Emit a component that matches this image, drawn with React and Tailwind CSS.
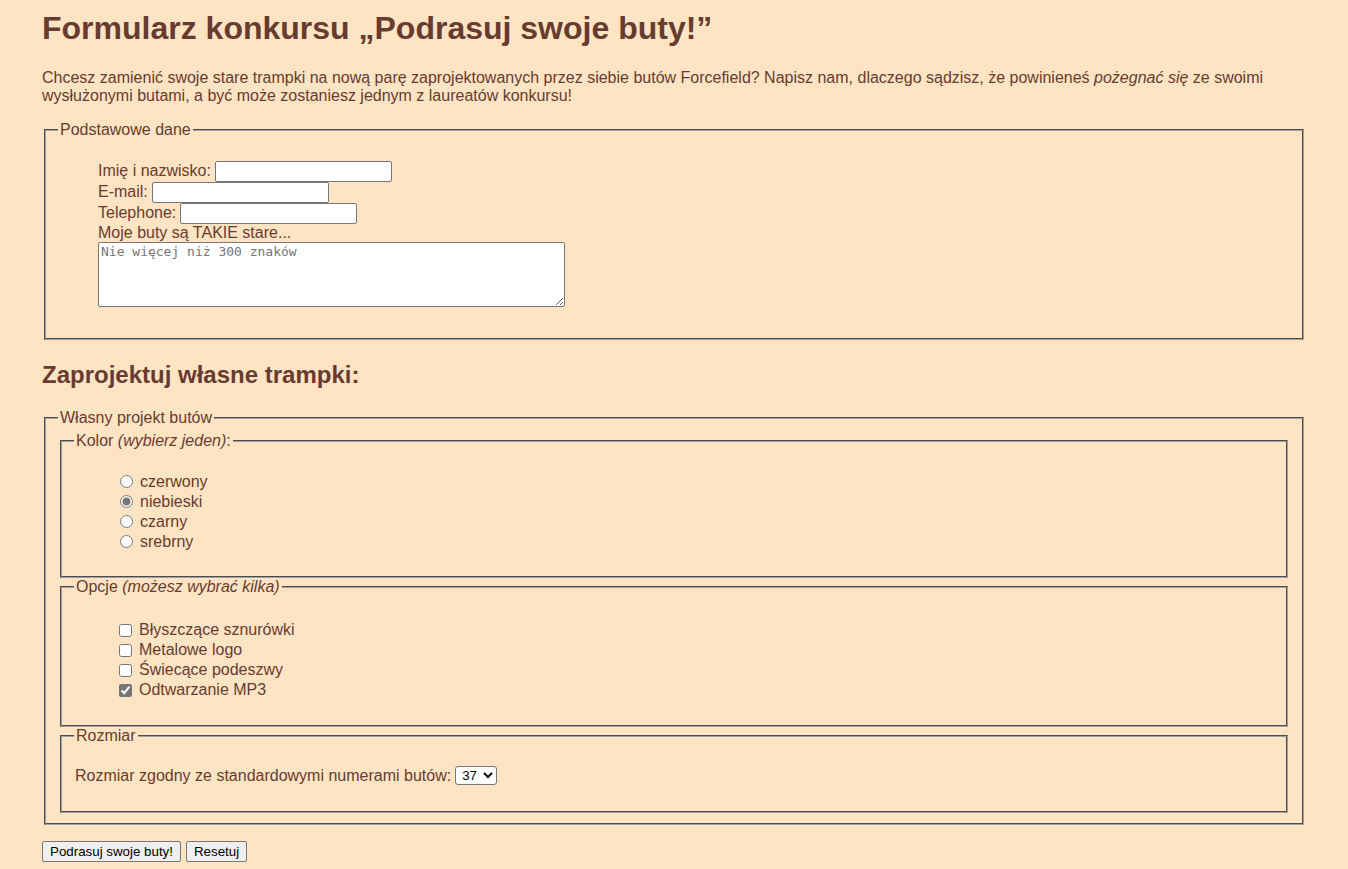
import { useState } from "react";

const FIELDSET = "mx-[2px] border-2 [border-style:groove] border-[#a0a0a0] px-3 pt-[5.6px] pb-[10px]";
const LEGEND = "px-[2px] leading-[18px]";
const INPUT =
  "h-[21px] w-[177px] rounded-[2px] border border-[#767676] bg-white px-[2px] text-[13.33px] text-black outline-none";
const BUTTON = "h-[21px] rounded-[2px] border border-[#767676] bg-[#efefef] px-[7px] text-[13.33px] text-black";

const COLORS = ["czerwony", "niebieski", "czarny", "srebrny"];
const OPTIONS = [
  { id: "laces", label: "Błyszczące sznurówki", checked: false },
  { id: "logo", label: "Metalowe logo", checked: false },
  { id: "soles", label: "Świecące podeszwy", checked: false },
  { id: "mp3", label: "Odtwarzanie MP3", checked: true },
];

export default function App() {
  const [color, setColor] = useState("niebieski");
  const [opts, setOpts] = useState(() => Object.fromEntries(OPTIONS.map((o) => [o.id, o.checked])));
  const [size, setSize] = useState("37");

  return (
    <div
      className="min-h-screen bg-[#ffe4c4] px-[42px] pb-2 pt-[10px] text-[16px] text-[#683b30]"
      style={{ fontFamily: '"Liberation Sans", Arial, sans-serif' }}
    >
      <h1 className="mb-[21px] text-[32px] font-bold leading-[37px]">Formularz konkursu „Podrasuj swoje buty!”</h1>
      <p className="mb-4 mt-[22px] leading-[18px]">
        Chcesz zamienić swoje stare trampki na nową parę zaprojektowanych przez siebie butów Forcefield? Napisz nam,
        dlaczego sądzisz, że powinieneś <em>pożegnać się</em> ze swoimi wysłużonymi butami, a być może zostaniesz
        jednym z laureatów konkursu!
      </p>

      <form onSubmit={(e) => e.preventDefault()}>
        <fieldset className={FIELDSET}>
          <legend className={LEGEND}>Podstawowe dane</legend>
          <ul className="my-4 pl-10">
            <li className="flex h-[21px] items-center gap-1">
              <label htmlFor="name">Imię i nazwisko:</label>
              <input id="name" type="text" className={INPUT} />
            </li>
            <li className="flex h-[21px] items-center gap-1">
              <label htmlFor="email">E-mail:</label>
              <input id="email" type="email" className={INPUT} />
            </li>
            <li className="flex h-[21px] items-center gap-1">
              <label htmlFor="tel">Telephone:</label>
              <input id="tel" type="tel" className={INPUT} />
            </li>
            <li className="flex h-[18px] items-center">
              <label htmlFor="story">Moje buty są TAKIE stare...</label>
            </li>
            <li className="h-[70px]">
              <textarea
                id="story"
                placeholder="Nie więcej niż 300 znaków"
                className="block h-[65px] w-[467px] rounded-[2px] border border-[#767676] bg-white px-[2px] py-[1px] text-[13px] leading-[15px] text-black outline-none placeholder:text-[#757575]"
                style={{ fontFamily: '"DejaVu Sans Mono", "Liberation Mono", monospace' }}
              />
            </li>
          </ul>
        </fieldset>

        <h2 className="mb-[20px] mt-[21px] text-[24px] font-bold leading-[28px]">Zaprojektuj własne trampki:</h2>

        <fieldset className={FIELDSET}>
          <legend className={LEGEND}>Własny projekt butów</legend>

          <fieldset className="mx-[2px] border-2 [border-style:groove] border-[#a0a0a0] px-3 pb-[8px] pt-[5.6px]">
            <legend className={LEGEND}>
              Kolor <em>(wybierz jeden)</em>:
            </legend>
            <ul className="my-4 pl-10">
              {COLORS.map((c) => (
                <li key={c} className="flex h-5 items-center">
                  <input
                    type="radio"
                    name="color"
                    id={`c-${c}`}
                    checked={color === c}
                    onChange={() => setColor(c)}
                    className="ml-[6px] mr-[7px] h-[13px] w-[13px] accent-[#767676]"
                  />
                  <label htmlFor={`c-${c}`}>{c}</label>
                </li>
              ))}
            </ul>
          </fieldset>

          <fieldset className={FIELDSET}>
            <legend className={LEGEND}>
              Opcje <em>(możesz wybrać kilka)</em>
            </legend>
            <ul className="mb-[15px] mt-[19px] pl-10">
              {OPTIONS.map((o) => (
                <li key={o.id} className="flex h-5 items-center">
                  <input
                    type="checkbox"
                    id={o.id}
                    checked={opts[o.id]}
                    onChange={(e) => setOpts((s) => ({ ...s, [o.id]: e.target.checked }))}
                    className="ml-[5px] mr-[7px] h-[13px] w-[13px] accent-[#767676]"
                  />
                  <label htmlFor={o.id}>{o.label}</label>
                </li>
              ))}
            </ul>
          </fieldset>

          <fieldset className={FIELDSET}>
            <legend className={LEGEND}>Rozmiar</legend>
            <p className="my-4 flex h-[18px] items-center gap-1 pl-px">
              <label htmlFor="size">Rozmiar zgodny ze standardowymi numerami butów:</label>
              <select
                id="size"
                value={size}
                onChange={(e) => setSize(e.target.value)}
                className="h-[19px] w-[42px] rounded-[3px] border border-[#767676] bg-white pl-[2px] text-[13.33px] text-black"
              >
                {["36", "37", "38", "39", "40", "41", "42", "43", "44", "45"].map((n) => (
                  <option key={n} value={n}>
                    {n}
                  </option>
                ))}
              </select>
            </p>
          </fieldset>
        </fieldset>

        <p className="mt-4 flex gap-[5px]">
          <button type="submit" className={BUTTON}>
            Podrasuj swoje buty!
          </button>
          <button type="reset" className={BUTTON}>
            Resetuj
          </button>
        </p>
      </form>
    </div>
  );
}
